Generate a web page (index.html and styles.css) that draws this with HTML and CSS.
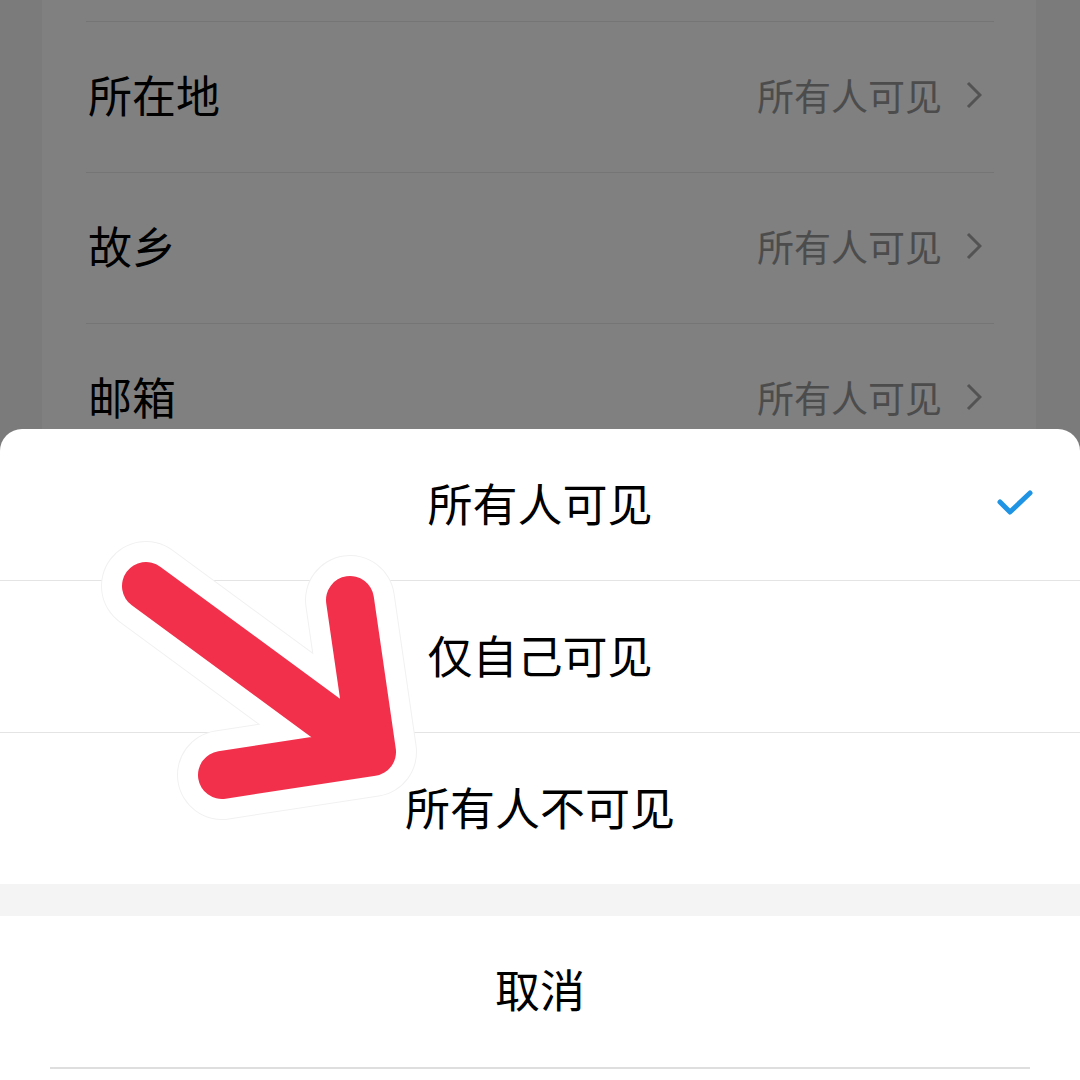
FILE: index.html
```html
<!DOCTYPE html>
<html lang="zh-CN">
<head>
  <meta charset="UTF-8">
  <meta name="viewport" content="width=device-width, initial-scale=1.0">
  <title>隐私设置</title>
  <link rel="stylesheet" href="styles.css">
</head>
<body>

  <div class="page">
    <div class="card">
      <div class="row">
        <span class="row-label">所在地</span>
        <span class="row-value">所有人可见
          <svg class="chev" viewBox="0 0 16 28" width="16" height="28"><polyline points="2,2 14,14 2,26" /></svg>
        </span>
      </div>
      <div class="row">
        <span class="row-label">故乡</span>
        <span class="row-value">所有人可见
          <svg class="chev" viewBox="0 0 16 28" width="16" height="28"><polyline points="2,2 14,14 2,26" /></svg>
        </span>
      </div>
      <div class="row">
        <span class="row-label">邮箱</span>
        <span class="row-value">所有人可见
          <svg class="chev" viewBox="0 0 16 28" width="16" height="28"><polyline points="2,2 14,14 2,26" /></svg>
        </span>
      </div>
      <div class="row"></div>
    </div>
  </div>

  <div class="sheet">
    <div class="option">
      所有人可见
      <svg class="check" viewBox="0 0 40 30" width="40" height="30"><polyline points="4,13 14,23 34,4" /></svg>
    </div>
    <div class="option">仅自己可见</div>
    <div class="option last">所有人不可见</div>
    <div class="gap"></div>
    <div class="option cancel">取消</div>
    <div class="bottom-line"></div>
  </div>

  <svg class="arrow" viewBox="0 0 1080 1080" width="1080" height="1080">
    <g fill="none" stroke-linecap="round" stroke-linejoin="round">
      <path d="M146,586 L372,752 M350,600 L372,752 L222,775" stroke="#f1f1f1" stroke-width="90" />
      <path d="M146,586 L372,752 M350,600 L372,752 L222,775" stroke="#ffffff" stroke-width="88" />
      <path d="M146,586 L372,752 M350,600 L372,752 L222,775" stroke="#f2304b" stroke-width="48" />
    </g>
  </svg>

</body>
</html>
```

FILE: styles.css
```css
body {
  margin: 0;
  background: #7b7b7b;
  font-family: "Noto Sans CJK SC", "Noto Sans", sans-serif;
  width: 1080px;
  height: 1080px;
  overflow: hidden;
  position: relative;
}
.page {
  padding: 0 44px 0 42px;
}
.card {
  background: #808080;
  padding: 21px 42px 0 44px;
  height: 1100px;
}
.row {
  height: 150px;
  border-top: 1px solid #757575;
  display: flex;
  align-items: center;
  justify-content: space-between;
}
.row-label {
  font-size: 44px;
  color: #000;
  padding-left: 2px;
  padding-bottom: 6px;
}
.row-value {
  font-size: 37px;
  color: #4c4c4c;
  display: flex;
  align-items: center;
  gap: 24px;
  padding-bottom: 4px;
}
.chev {
  fill: none;
  stroke: #535353;
  stroke-width: 3;
  margin-right: 12px;
}
.sheet {
  position: absolute;
  left: 0;
  right: 0;
  top: 429px;
  bottom: 0;
  background: #fff;
  border-radius: 22px 22px 0 0;
}
.option {
  height: 152px;
  display: flex;
  align-items: center;
  justify-content: center;
  font-size: 45px;
  color: #000;
  border-bottom: 1px solid #e4e4e4;
  position: relative;
  box-sizing: border-box;
  padding-bottom: 4px;
}
.option.last {
  height: 151px;
  border-bottom: none;
}
.check {
  position: absolute;
  right: 44px;
  top: 60px;
  fill: none;
  stroke: #1f94e4;
  stroke-width: 5;
  stroke-linecap: round;
  stroke-linejoin: round;
}
.gap {
  height: 32px;
  background: #f4f4f4;
}
.cancel {
  border-bottom: none;
  height: 151px;
  padding-bottom: 6px;
}
.bottom-line {
  margin: 0 50px;
  border-top: 2px solid #dedede;
}
.arrow {
  position: absolute;
  left: 0;
  top: 0;
  pointer-events: none;
}
```
